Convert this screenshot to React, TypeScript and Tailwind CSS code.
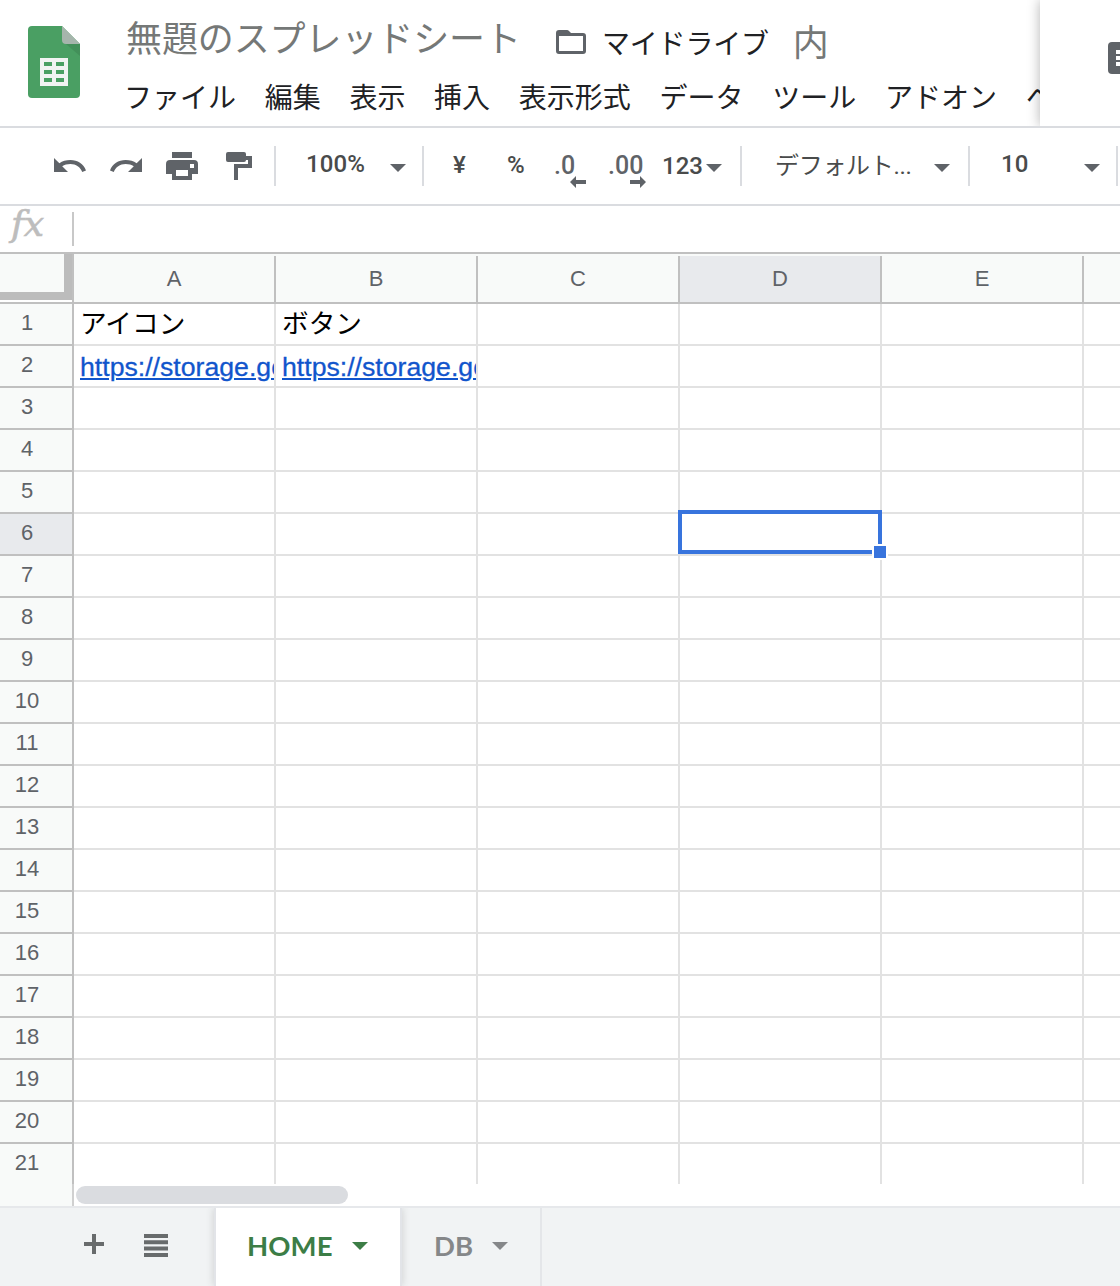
import type { ReactNode } from 'react';
import clsx from 'clsx';

const menus = ['ファイル', '編集', '表示', '挿入', '表示形式', 'データ', 'ツール', 'アドオン', 'ヘルプ'];

const columns = ['A', 'B', 'C', 'D', 'E'];

const rows = Array.from({ length: 21 }, (_, i) => i + 1);

const cells: Record<string, string> = {
    A1: 'アイコン',
    B1: 'ボタン',
    A2: 'https://storage.go',
    B2: 'https://storage.go',
};

const selected = { column: 'D', row: 6 };

function Caret({ className }: { className?: string }) {
    return (
        <svg className={clsx('h-2 w-4 shrink-0', className)} viewBox="0 0 16 8" fill="currentColor">
            <path d="M0 0h16L8 8z" />
        </svg>
    );
}

function Separator() {
    return <div className="h-10 w-0.5 shrink-0 bg-[#dadce0]" />;
}

function SheetsLogo() {
    return (
        <svg className="h-[72px] w-[52px] shrink-0" viewBox="0 0 52 72">
            <path d="M4 0h30l18 18v50a4 4 0 0 1-4 4H4a4 4 0 0 1-4-4V4a4 4 0 0 1 4-4z" fill="#4a9f63" />
            <path d="M38 18h14v12z" fill="#43905a" />
            <path d="M34 0l18 18H38a4 4 0 0 1-4-4z" fill="#a6b5ac" />
            <path d="M12 32h28v28H12zM16 36v4h8v-4zM28 36v4h8v-4zM16 44v4h8v-4zM28 44v4h8v-4zM16 52v4h8v-4zM28 52v4h8v-4z" fill="#f1f3f2" fillRule="evenodd" />
        </svg>
    );
}

function Header() {
    return (
        <header className="flex h-32 border-b-2 border-[#dadce0]">
            <div className="flex w-[1040px] shrink-0 overflow-hidden">
                <div className="w-[124px] shrink-0 pt-[26px] pl-7">
                    <SheetsLogo />
                </div>
                <div className="min-w-0 flex-1 whitespace-nowrap">
                    <div className="flex h-[72px] items-center">
                        <h1 className="w-[432px] pt-[7px] pl-0.5 text-[36px] leading-[72px] tracking-[-0.1px] text-[#757877]">無題のスプレッドシート</h1>
                        <svg className="mt-3 h-6 w-[30px] shrink-0 text-[#5f6368]" viewBox="0 0 30 24" fill="currentColor" fillRule="evenodd">
                            <path d="M3 0h8a3 3 0 0 1 2 1l2 2h12a3 3 0 0 1 3 3v15a3 3 0 0 1-3 3H3a3 3 0 0 1-3-3V3a3 3 0 0 1 3-3zM3 6v15h24V6z" />
                        </svg>
                        <span className="mt-[18px] ml-4 text-[28px] tracking-[-0.2px] text-[#202124]">マイドライブ</span>
                        <span className="mt-4 ml-6 text-[36px] text-[#757877]">内</span>
                    </div>
                    <nav className="flex h-[50px] items-center gap-[28.7px] pt-1 text-[28px] text-[#202124]">
                        {menus.map((label) => (
                            <span key={label}>{label}</span>
                        ))}
                    </nav>
                </div>
            </div>
            <div className="flex flex-1 justify-end overflow-hidden bg-white pt-[42px] shadow-[0_0_12px_rgba(0,0,0,0.3)] [clip-path:inset(0_0_0_-16px)]">
                <svg className="h-8 w-3 shrink-0" viewBox="0 0 12 32">
                    <path d="M4 0h8v32H4a4 4 0 0 1-4-4V4a4 4 0 0 1 4-4z" fill="#5f6368" />
                    <path d="M8 8h4v4H8zM8 14h4v4H8zM8 20h4v4H8z" fill="#fff" />
                </svg>
            </div>
        </header>
    );
}

function DecimalButton({ label, children, className }: { label: string; children: ReactNode; className: string }) {
    return (
        <div className={clsx('flex shrink-0 flex-col text-[#5f6368]', className)}>
            <span className="h-[22px] text-[25px] leading-6">{label}</span>
            <svg className="h-3 w-4 self-end" viewBox="0 0 16 12" fill="currentColor">
                {children}
            </svg>
        </div>
    );
}

function Toolbar() {
    return (
        <div className="flex h-[78px] items-center border-b-2 border-[#dadce0] font-[Roboto,'Noto_Sans_CJK_JP',sans-serif] text-[24px] font-medium whitespace-nowrap text-[#494b4b]">
            <div className="flex w-[274px] shrink-0 items-center pl-[54px] text-[#5f6368]">
                <svg className="mb-0.5 h-3.5 w-8" viewBox="0 0 32 14" fill="currentColor">
                    <path d="M0 0l5.4 5.2C8.4 3.2 12 2 16.4 2 23.6 2 29.6 6 32 12.4L28.2 14C26.4 9 22 6 16.4 6c-3.2 0-6 .9-8.2 2.3L14 14H0z" />
                </svg>
                <svg className="mb-0.5 ml-6 h-3.5 w-8 -scale-x-100" viewBox="0 0 32 14" fill="currentColor">
                    <path d="M0 0l5.4 5.2C8.4 3.2 12 2 16.4 2 23.6 2 29.6 6 32 12.4L28.2 14C26.4 9 22 6 16.4 6c-3.2 0-6 .9-8.2 2.3L14 14H0z" />
                </svg>
                <svg className="ml-6 h-7 w-8" viewBox="0 0 32 28" fill="currentColor" fillRule="evenodd">
                    <path d="M6 0h20v6H6zM4 8h24a4 4 0 0 1 4 4v10h-6v6H6v-6H0V12a4 4 0 0 1 4-4zM10 18v6h12v-6zM24 12v4h4v-4z" />
                </svg>
                <svg className="ml-7 h-7 w-[26px]" viewBox="0 0 26 28" fill="currentColor">
                    <path d="M2 0h16a2 2 0 0 1 2 2v2h6v12H12v12H8V12h14V8h-2a2 2 0 0 1-2 2H2a2 2 0 0 1-2-2V2a2 2 0 0 1 2-2z" />
                </svg>
            </div>
            <Separator />
            <div className="flex w-[146px] shrink-0 items-center justify-between pr-4 pl-[30px]">
                <span className="pb-1 tracking-[0.1px]">100%</span>
                <Caret className="mt-1 text-[#5f6368]" />
            </div>
            <Separator />
            <div className="flex w-[316px] shrink-0 items-center">
                <span className="ml-[29px] w-[14px] pb-0.5">¥</span>
                <span className="ml-10 w-[19px] pb-0.5">%</span>
                <DecimalButton label=".0" className="mt-[9px] ml-7 w-8">
                    <path d="M6 0v4h10v4H6v4L0 6z" />
                </DecimalButton>
                <DecimalButton label=".00" className="mt-[9px] ml-[22px] w-[38px]">
                    <path d="M10 0v4H0v4h10v4l6-6z" />
                </DecimalButton>
                <span className="ml-4 w-11">123</span>
                <Caret className="mt-1 text-[#5f6368]" />
            </div>
            <Separator />
            <div className="flex w-[226px] shrink-0 items-center justify-between pr-[18px] pl-[33px]">
                <span className="font-normal tracking-[-0.3px]">デフォルト...</span>
                <Caret className="mt-1 text-[#5f6368]" />
            </div>
            <Separator />
            <div className="flex w-[146px] shrink-0 items-center justify-between pr-4 pl-[31px]">
                <span className="pb-1">10</span>
                <Caret className="mt-1 text-[#5f6368]" />
            </div>
            <Separator />
        </div>
    );
}

function FormulaBar() {
    return (
        <div className="flex h-12 items-center border-b-2 border-[#c0c0c0]">
            <div className="w-[72px] pb-2.5 pl-[11px] font-['DejaVu_Serif','Liberation_Serif',serif] text-[36px] leading-9 tracking-[-0.5px] text-[#bdbdbd] italic [-webkit-text-stroke:0.6px_#bdbdbd]">fx</div>
            <div className="h-[34px] w-0.5 bg-[#c8c8c8]" />
        </div>
    );
}

function Grid() {
    return (
        <div className="h-[952px] overflow-hidden">
            <div className="flex h-[50px] text-[22px] text-[#5f6368]">
                <div className="flex w-[74px] shrink-0 flex-col border-r-2 border-b-2 border-[#c0c0c0]">
                    <div className="h-[46px] border-r-8 border-b-8 border-[#bcbcbc] bg-[#f8faf9]" />
                </div>
                {columns.map((column) => (
                    <div key={column} className="w-[202px] shrink-0 border-b-2 border-[#c0c0c0] bg-[#f8faf9] pt-0.5">
                        <div className={clsx('flex h-full items-center justify-center border-r-2 border-[#c0c0c0] pb-0.5', column === selected.column && 'bg-[#e8eaed]')}>
                            {column}
                        </div>
                    </div>
                ))}
                <div className="flex-1 border-b-2 border-[#c0c0c0] bg-[#f8faf9]" />
            </div>
            <div className="h-[880px] overflow-hidden">
                {rows.map((row) => (
                    <div key={row} className="flex h-[42px]">
                        <div
                            className={clsx(
                                'w-[74px] shrink-0 border-r-2 border-b-2 border-[#c0c0c0] pr-[18px] text-center text-[22px] leading-[38px] text-[#5f6368]',
                                row === selected.row ? 'bg-[#e8eaed]' : 'bg-[#f8faf9]',
                            )}
                        >
                            {row}
                        </div>
                        {columns.map((column) => {
                            const value = cells[column + row];
                            const isSelected = column === selected.column && row === selected.row;

                            return (
                                <div key={column} className="relative w-[202px] shrink-0 border-r-2 border-b-2 border-[#e2e2e2]">
                                    {value && (
                                        <div
                                            className={clsx(
                                                'h-10 overflow-hidden pl-1.5 text-[26.67px] whitespace-nowrap',
                                                row === 2
                                                    ? 'leading-[42px] text-[#1155cc] underline decoration-2 underline-offset-[2px] [-webkit-text-stroke:0.3px_#1155cc]'
                                                    : 'leading-[40px] text-black',
                                            )}
                                        >
                                            {value}
                                        </div>
                                    )}
                                    {isSelected && (
                                        <div className="absolute -top-1 -left-0.5 z-10 h-11 w-[204px] border-4 border-[#3874dd]">
                                            <div className="absolute -right-2.5 -bottom-2.5 box-content size-3 border-2 border-white bg-[#3874dd]" />
                                        </div>
                                    )}
                                </div>
                            );
                        })}
                        <div className="flex-1 border-b-2 border-[#e2e2e2]" />
                    </div>
                ))}
            </div>
            <div className="flex h-[22px]">
                <div className="w-[74px] border-r-2 border-[#d0d0d0] bg-[#f8faf9]" />
                <div className="mt-0.5 ml-0.5 h-[18px] w-[272px] rounded-full bg-[#dadce0]" />
            </div>
        </div>
    );
}

function SheetTabs() {
    return (
        <footer className="flex h-20 border-t-2 border-[#e6e8eb] bg-[#f1f3f4] font-[Lato,sans-serif] text-[28px] font-bold">
            <div className="flex w-[214px] items-center pb-1 pl-[84px] text-[#686b6c]">
                <svg className="mb-0.5 h-5 w-5" viewBox="0 0 20 20" fill="currentColor">
                    <path d="M8 0h4v8h8v4h-8v8H8v-8H0V8h8z" />
                </svg>
                <svg className="ml-10 h-[23px] w-6" viewBox="0 0 24 23" fill="currentColor">
                    <path d="M0 0h24v4H0zM0 6.3h24v4H0zM0 12.6h24v4H0zM0 18.9h24v4H0z" />
                </svg>
            </div>
            <div className="z-10 flex w-[188px] items-center border-x-2 border-[#e2e4e8] bg-white pb-0.5 pl-[31px] text-[#3c7d46] shadow-[0_0_8px_rgba(60,64,67,0.2)] [clip-path:inset(0_-10px_0_-10px)]">
                <span className="w-[105px] text-[27.5px] tracking-[0.1px]">HOME</span>
                <Caret />
            </div>
            <div className="flex w-[140px] items-center border-r-2 border-[#e4e6e9] pb-0.5 pl-8 text-[#858789]">
                <span className="w-[58px] text-[27.5px]">DB</span>
                <Caret />
            </div>
        </footer>
    );
}

export default function App() {
    return (
        <div className="h-[1286px] w-[1120px] overflow-hidden bg-white font-['Liberation_Sans','Noto_Sans_CJK_JP',sans-serif]">
            <Header />
            <Toolbar />
            <FormulaBar />
            <Grid />
            <SheetTabs />
        </div>
    );
}
